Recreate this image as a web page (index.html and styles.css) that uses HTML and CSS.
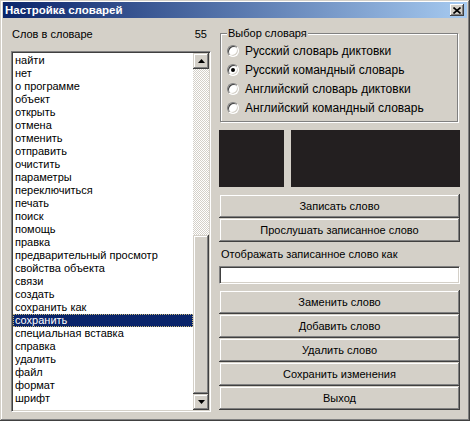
FILE: index.html
```html
<!DOCTYPE html>
<html lang="ru">

<head>
    <meta charset="UTF-8">
    <meta name="viewport" content="width=device-width, initial-scale=1.0">
    <title>Настройка словарей</title>
    <link rel="stylesheet" href="styles.css">
</head>

<body>
    <div class="window">
        <div class="titlebar">
            <span class="title">Настройка словарей</span>
            <button class="close-btn" aria-label="Закрыть">
                <svg width="8" height="7" viewBox="0 0 8 7">
                    <path d="M0.5 0.5 L7.5 6.5 M7.5 0.5 L0.5 6.5" stroke="#000" stroke-width="1.6" fill="none"/>
                </svg>
            </button>
        </div>

        <div class="content">
            <div class="left-col">
                <div class="count-row">
                    <span>Слов в словаре</span>
                    <span>55</span>
                </div>
                <div class="listbox">
                    <ul class="word-list">
                        <li>найти</li>
                        <li>нет</li>
                        <li>о программе</li>
                        <li>объект</li>
                        <li>открыть</li>
                        <li>отмена</li>
                        <li>отменить</li>
                        <li>отправить</li>
                        <li>очистить</li>
                        <li>параметры</li>
                        <li>переключиться</li>
                        <li>печать</li>
                        <li>поиск</li>
                        <li>помощь</li>
                        <li>правка</li>
                        <li>предварительный просмотр</li>
                        <li>свойства объекта</li>
                        <li>связи</li>
                        <li>создать</li>
                        <li>сохранить как</li>
                        <li class="selected">сохранить</li>
                        <li>специальная вставка</li>
                        <li>справка</li>
                        <li>удалить</li>
                        <li>файл</li>
                        <li>формат</li>
                        <li>шрифт</li>
                    </ul>
                    <div class="scrollbar">
                        <div class="sb-btn">
                            <svg width="7" height="4" viewBox="0 0 7 4"><polygon points="3.5,0 7,4 0,4" fill="#000"/></svg>
                        </div>
                        <div class="sb-track">
                            <div class="sb-thumb"></div>
                        </div>
                        <div class="sb-btn">
                            <svg width="7" height="4" viewBox="0 0 7 4"><polygon points="0,0 7,0 3.5,4" fill="#000"/></svg>
                        </div>
                    </div>
                </div>
            </div>

            <div class="right-col">
                <fieldset class="group">
                    <legend>Выбор словаря</legend>
                    <label class="radio-row"><span class="radio"></span>Русский словарь диктовки</label>
                    <label class="radio-row"><span class="radio checked"></span>Русский командный словарь</label>
                    <label class="radio-row"><span class="radio"></span>Английский словарь диктовки</label>
                    <label class="radio-row"><span class="radio"></span>Английский командный словарь</label>
                </fieldset>

                <div class="meters">
                    <div class="meter meter-small"></div>
                    <div class="meter meter-wide"></div>
                </div>

                <div class="btn-stack first-stack">
                    <button class="button">Записать слово</button>
                    <button class="button">Прослушать записанное слово</button>
                </div>

                <div class="field-label">Отображать записанное слово как</div>
                <input class="word-input" type="text">

                <div class="btn-stack last-stack">
                    <button class="button">Заменить слово</button>
                    <button class="button">Добавить слово</button>
                    <button class="button">Удалить слово</button>
                    <button class="button">Сохранить изменения</button>
                    <button class="button">Выход</button>
                </div>
            </div>
        </div>
    </div>
</body>

</html>
```

FILE: styles.css
```css
body {
    margin: 0;
    font-family: "Liberation Sans", Arial, sans-serif;
    font-size: 11px;
    color: #000;
    background-color: #d4d0c8;
}

.window {
    box-sizing: border-box;
    width: 470px;
    height: 421px;
    padding: 2px 3px 3px 3px;
    background-color: #d4d0c8;
    box-shadow: inset -1px -1px #404040, inset 1px 1px #d4d0c8,
        inset -2px -2px #808080, inset 2px 2px #fff;
    display: flex;
    flex-direction: column;
}

/* Title bar */
.titlebar {
    height: 16px;
    display: flex;
    align-items: center;
    justify-content: space-between;
    padding: 0 3px 0 2px;
    background: linear-gradient(to right, #0a246a, #a6caf0);
}

.title {
    color: #fff;
    font-weight: bold;
    font-size: 11.5px;
}

.close-btn {
    box-sizing: border-box;
    width: 14px;
    height: 12px;
    padding: 0;
    border: none;
    background-color: #d4d0c8;
    display: flex;
    align-items: center;
    justify-content: center;
    box-shadow: inset -1px -1px #404040, inset 1px 1px #fff,
        inset -2px -2px #808080;
}

/* Main area */
.content {
    flex: 1;
    display: flex;
    gap: 8px;
    padding: 9px 7px 0 8px;
}

.left-col {
    width: 200px;
    display: flex;
    flex-direction: column;
}

.count-row {
    height: 14px;
    line-height: 14px;
    display: flex;
    justify-content: space-between;
    padding: 0 4px 0 1px;
    margin-bottom: 10px;
}

.listbox {
    box-sizing: border-box;
    height: 361px;
    display: flex;
    background-color: #fff;
    border: 1px solid;
    border-color: #808080 #fff #fff #808080;
    box-shadow: inset 1px 1px #404040, inset -1px -1px #d4d0c8;
    padding: 1px;
}

.word-list {
    flex: 1;
    list-style: none;
    margin: 0;
    padding: 1px 0 0 0;
}

.word-list li {
    height: 13px;
    line-height: 13px;
    padding-left: 2px;
    white-space: nowrap;
}

.word-list li.selected {
    background-color: #0a246a;
    color: #fff;
    outline: 1px dotted #c8b878;
    outline-offset: -1px;
}

/* Scrollbar */
.scrollbar {
    width: 16px;
    display: flex;
    flex-direction: column;
}

.sb-btn,
.sb-thumb,
.button {
    background-color: #d4d0c8;
    box-shadow: inset -1px -1px #404040, inset 1px 1px #d4d0c8,
        inset -2px -2px #808080, inset 2px 2px #fff;
}

.sb-btn {
    height: 16px;
    display: flex;
    align-items: center;
    justify-content: center;
}

.sb-track {
    flex: 1;
    display: flex;
    flex-direction: column;
    justify-content: flex-end;
    background: repeating-conic-gradient(#fff 0 25%, #d4d0c8 0 50%) 0 0 / 2px 2px;
}

.sb-thumb {
    height: 159px;
}

/* Right column */
.right-col {
    width: 241px;
    display: flex;
    flex-direction: column;
}

.group {
    margin: 0 2px 0 1px;
    padding: 1px 6px 4px 6px;
    border: 1px solid #808080;
    box-shadow: inset 1px 1px #fff, 1px 1px #fff;
}

.group legend {
    padding: 0 1px;
    line-height: 13px;
    background-color: #d4d0c8;
}

.radio-row {
    height: 19px;
    display: flex;
    align-items: center;
    gap: 6px;
    font-size: 12px;
}

.radio {
    box-sizing: border-box;
    position: relative;
    width: 12px;
    height: 12px;
    border-radius: 50%;
    background-color: #fff;
    border: 1px solid;
    border-color: #808080 #fff #fff #808080;
    box-shadow: inset 1px 1px #404040, inset -1px -1px #d4d0c8;
}

.radio.checked::after {
    content: "";
    position: absolute;
    left: 3px;
    top: 3px;
    width: 4px;
    height: 4px;
    border-radius: 50%;
    background-color: #000;
}

.meters {
    display: flex;
    gap: 7px;
    margin-top: 8px;
}

.meter {
    height: 57px;
    background-color: #231f20;
}

.meter-small {
    width: 65px;
}

.meter-wide {
    flex: 1;
}

.btn-stack {
    display: flex;
    flex-direction: column;
}

.first-stack {
    margin-top: 7px;
}

.last-stack {
    margin-top: 6px;
}

.button {
    height: 24px;
    border: none;
    padding: 0;
    font-family: inherit;
    font-size: 11px;
    color: #000;
}

.field-label {
    margin-top: 6px;
    padding-left: 2px;
    line-height: 13px;
}

.word-input {
    box-sizing: border-box;
    height: 18px;
    margin: 5px 0 0 0;
    background-color: #fff;
    border: 1px solid;
    border-color: #808080 #fff #fff #808080;
    box-shadow: inset 1px 1px #404040, inset -1px -1px #d4d0c8;
    outline: none;
}
```
